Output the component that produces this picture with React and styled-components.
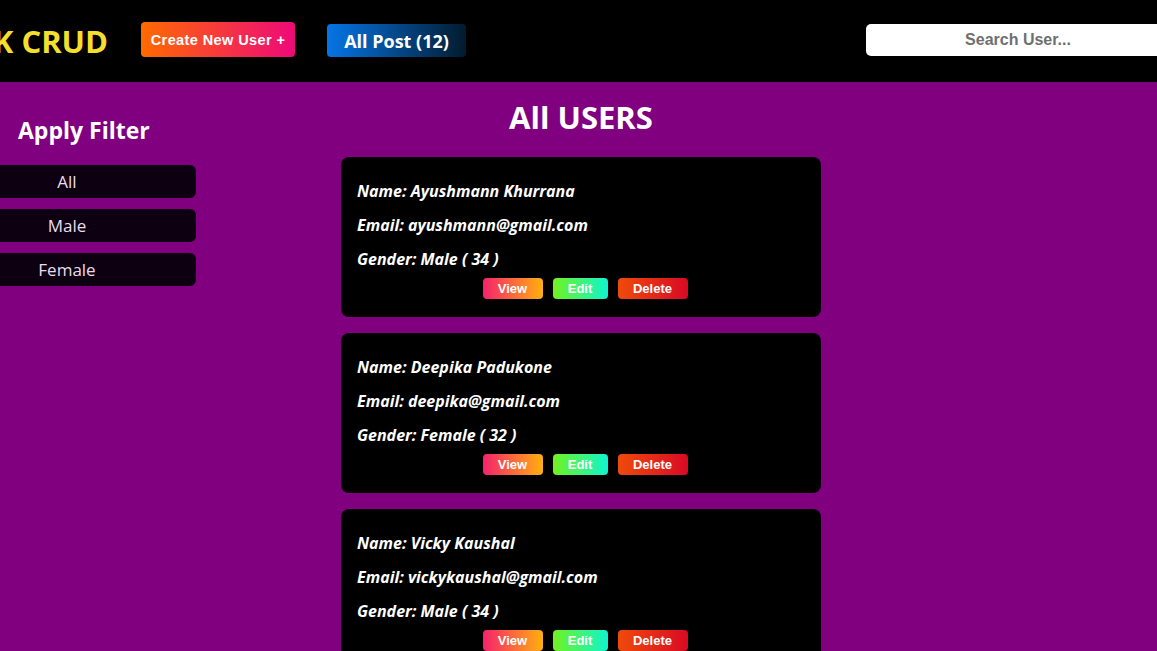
import React, { useState } from 'react';
import styled, { createGlobalStyle } from 'styled-components';

const GlobalStyle = createGlobalStyle`
  html, body {
    margin: 0;
    padding: 0;
    background: #800080;
    overflow: hidden;
  }
  * { box-sizing: border-box; }
`;

const Page = styled.div`
  margin-left: -62px;
  width: 1240px;
  min-height: 651px;
  background: #800080;
  font-family: "Open Sans", "Noto Sans", sans-serif;
`;

const Nav = styled.nav`
  height: 82px;
  background: #000;
  display: flex;
  align-items: center;
`;

const LogoBox = styled.div`
  flex: 0 0 170px;
  display: flex;
  justify-content: flex-end;
  white-space: nowrap;
`;

const Logo = styled.h1`
  margin: 0;
  color: #f4df2c;
  font-size: 31px;
  font-weight: 700;
  line-height: 40px;
`;

const CreateButton = styled.button`
  margin-left: 33px;
  margin-top: -3px;
  height: 35px;
  width: 154px;
  border: none;
  border-radius: 4px;
  background: linear-gradient(to right, #ff6a00, #ee0979);
  color: #fff;
  font-family: "Liberation Sans", Arial, sans-serif;
  font-weight: 700;
  font-size: 14.5px;
  letter-spacing: 0.4px;
  padding: 0;
`;

const PostButton = styled.button`
  margin-left: 32px;
  margin-top: -1px;
  height: 33px;
  width: 139px;
  border: none;
  border-radius: 4px;
  background: linear-gradient(to right, #0575e6, #021b2e);
  color: #fff;
  font-family: "Open Sans", "Noto Sans", sans-serif;
  font-weight: 700;
  font-size: 18px;
  padding: 0;
`;

const Search = styled.input`
  margin-left: auto;
  margin-right: 8px;
  margin-top: -2px;
  width: 304px;
  height: 32px;
  border: none;
  border-radius: 5px;
  background: #fff;
  text-align: center;
  font-family: "Liberation Sans", Arial, sans-serif;
  font-weight: 700;
  font-size: 16px;
  outline: none;
  &::placeholder { color: #6f6f6f; }
`;

const Body = styled.div`
  display: flex;
  align-items: flex-start;
`;

const Sidebar = styled.aside`
  width: 258px;
  padding-top: 33px;
  display: flex;
  flex-direction: column;
  gap: 11px;
`;

const FilterTitle = styled.h2`
  margin: 0 0 9px 80px;
  color: #fff;
  font-size: 23px;
  font-weight: 700;
  line-height: 30px;
`;

const FilterButton = styled.button`
  width: 258px;
  height: 33px;
  border: none;
  border-radius: 6px;
  background: #0d0011;
  color: #eadcee;
  font-family: "Open Sans", "Noto Sans", sans-serif;
  font-size: 17px;
  padding: 0;
`;

const Main = styled.main`
  width: 770px;
  display: flex;
  flex-direction: column;
  align-items: center;
  padding-top: 16px;
`;

const Title = styled.h2`
  margin: 0 0 21px;
  color: #fff;
  font-size: 31px;
  font-weight: 700;
  line-height: 38px;
`;

const Card = styled.div`
  width: 480px;
  height: 160px;
  background: #000;
  border-radius: 8px;
  padding: 24px 16px 0;
  margin-bottom: 16px;
  display: flex;
  flex-direction: column;
`;

const Line = styled.p`
  margin: 0 0 14px;
  color: #fff;
  font-style: italic;
  font-weight: 700;
  font-size: 16px;
  line-height: 20px;
`;

const Actions = styled.div`
  display: flex;
  justify-content: center;
  gap: 10px;
  margin-top: -5px;
  padding-left: 8px;
`;

const grads = {
  view: 'linear-gradient(to right, #f5226b, #ffb00f)',
  edit: 'linear-gradient(to right, #71f21e, #0ff5d0)',
  del: 'linear-gradient(to right, #ef4a0c, #d80a24)',
};

const ActionButton = styled.button`
  width: ${(p) => p.$w}px;
  height: 21px;
  border: none;
  border-radius: 4px;
  background: ${(p) => grads[p.$kind]};
  color: #fff;
  font-family: "Liberation Sans", Arial, sans-serif;
  font-weight: 700;
  font-size: 13px;
  padding: 0;
`;

const users = [
  { name: 'Ayushmann Khurrana', email: 'ayushmann@gmail.com', gender: 'Male', age: 34 },
  { name: 'Deepika Padukone', email: 'deepika@gmail.com', gender: 'Female', age: 32 },
  { name: 'Vicky Kaushal', email: 'vickykaushal@gmail.com', gender: 'Male', age: 34 },
];

export default function App() {
  const [search, setSearch] = useState('');

  return (
    <>
      <GlobalStyle />
      <Page>
        <Nav>
          <LogoBox>
            <Logo>RTK CRUD</Logo>
          </LogoBox>
          <CreateButton>Create New User +</CreateButton>
          <PostButton>All Post (12)</PostButton>
          <Search
            placeholder="Search User..."
            value={search}
            onChange={(e) => setSearch(e.target.value)}
          />
        </Nav>
        <Body>
          <Sidebar>
            <FilterTitle>Apply Filter</FilterTitle>
            <FilterButton>All</FilterButton>
            <FilterButton>Male</FilterButton>
            <FilterButton>Female</FilterButton>
          </Sidebar>
          <Main>
            <Title>All USERS</Title>
            {users.map((u) => (
              <Card key={u.email}>
                <Line>Name: {u.name}</Line>
                <Line>Email: {u.email}</Line>
                <Line>Gender: {u.gender} ( {u.age} )</Line>
                <Actions>
                  <ActionButton $kind="view" $w={60}>View</ActionButton>
                  <ActionButton $kind="edit" $w={55}>Edit</ActionButton>
                  <ActionButton $kind="del" $w={70}>Delete</ActionButton>
                </Actions>
              </Card>
            ))}
          </Main>
        </Body>
      </Page>
    </>
  );
}
